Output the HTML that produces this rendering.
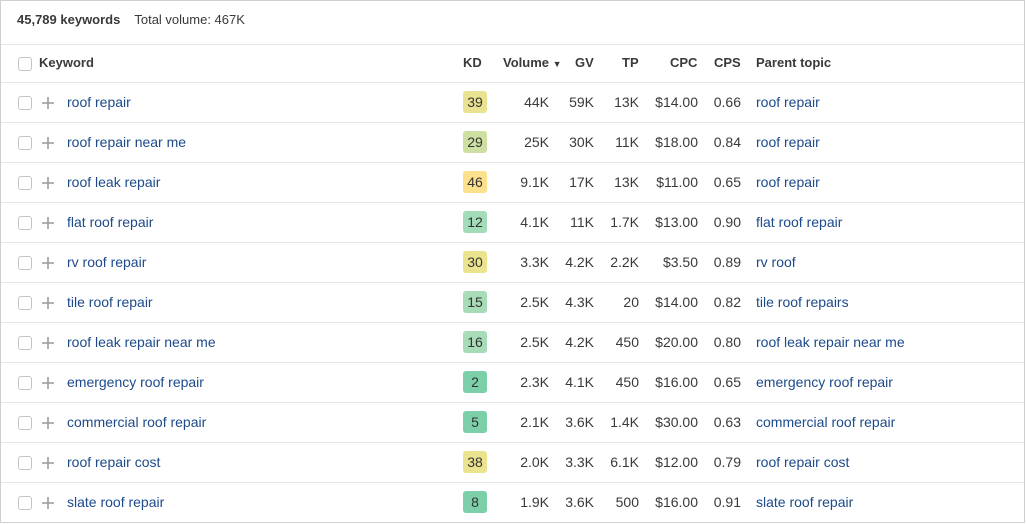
<!DOCTYPE html><html><head><style>
body{margin:0;background:#fff;font-family:"Liberation Sans",Arial,sans-serif;font-size:14px;color:#3a3a3a}
.f{position:absolute;left:0;top:0;width:1023px;height:521px;border:1px solid #cfcfcf;overflow:hidden}
.top{position:absolute;left:16px;top:11px;font-size:13px}
.top b{margin-right:14px}
.r{position:absolute;left:0;width:1023px;height:40px;border-top:1px solid #e6e6e6}
.r span{position:absolute;top:11px;white-space:nowrap}
.cb{position:absolute;left:17px;top:13px;width:12px;height:12px;border:1px solid #c4c4c4;border-radius:3px}
.pl{position:absolute;left:40px;top:13px}
.k{left:66px;color:#1c4a8a}
.n{text-align:right}
.b{position:absolute;left:462px;top:8px;width:24px;height:22px;border-radius:3px;text-align:center;line-height:22px;color:#333}
.h span{font-weight:bold;font-size:13px;top:10px}
</style></head><body><div class="f">
<div class="top"><b>45,789 keywords</b>Total volume: 467K</div>
<div class="r h" style="top:43px"><div class="cb" style="top:12px"></div><span style="left:38px">Keyword</span><span style="left:462px">KD</span><span style="left:502px">Volume <span style="position:static;font-size:9px">▼</span></span><span style="left:574px">GV</span><span style="left:621px">TP</span><span style="left:669px">CPC</span><span style="left:713px">CPS</span><span style="left:755px">Parent topic</span></div>
<div id="rows"></div>
</div>
<script>
var d=[["roof repair",39,"#e9e291","44K","59K","13K","$14.00","0.66","roof repair"],
["roof repair near me",29,"#cde0a2","25K","30K","11K","$18.00","0.84","roof repair"],
["roof leak repair",46,"#fde08b","9.1K","17K","13K","$11.00","0.65","roof repair"],
["flat roof repair",12,"#a3dcb8","4.1K","11K","1.7K","$13.00","0.90","flat roof repair"],
["rv roof repair",30,"#ece38f","3.3K","4.2K","2.2K","$3.50","0.89","rv roof"],
["tile roof repair",15,"#a8dbb8","2.5K","4.3K","20","$14.00","0.82","tile roof repairs"],
["roof leak repair near me",16,"#a8dbb8","2.5K","4.2K","450","$20.00","0.80","roof leak repair near me"],
["emergency roof repair",2,"#7ccfa8","2.3K","4.1K","450","$16.00","0.65","emergency roof repair"],
["commercial roof repair",5,"#7ccfa8","2.1K","3.6K","1.4K","$30.00","0.63","commercial roof repair"],
["roof repair cost",38,"#ece38f","2.0K","3.3K","6.1K","$12.00","0.79","roof repair cost"],
["slate roof repair",8,"#7ccfa8","1.9K","3.6K","500","$16.00","0.91","slate roof repair"]];
var h="";d.forEach(function(x,i){h+='<div class="r" style="top:'+(81+40*i)+'px"><div class="cb"></div><svg class="pl" width="14" height="14"><path d="M7 1V13M1 7H13" stroke="#999" stroke-width="1.5"/></svg><span class="k">'+x[0]+'</span><div class="b" style="background:'+x[2]+'">'+x[1]+'</div>'+
'<span class="n" style="right:475px">'+x[3]+'</span><span class="n" style="right:430px">'+x[4]+'</span><span class="n" style="right:385px">'+x[5]+'</span><span class="n" style="right:326px">'+x[6]+'</span><span class="n" style="right:283px">'+x[7]+'</span><span class="k" style="left:755px">'+x[8]+'</span></div>'});
document.getElementById("rows").innerHTML=h;
</script></body></html>
